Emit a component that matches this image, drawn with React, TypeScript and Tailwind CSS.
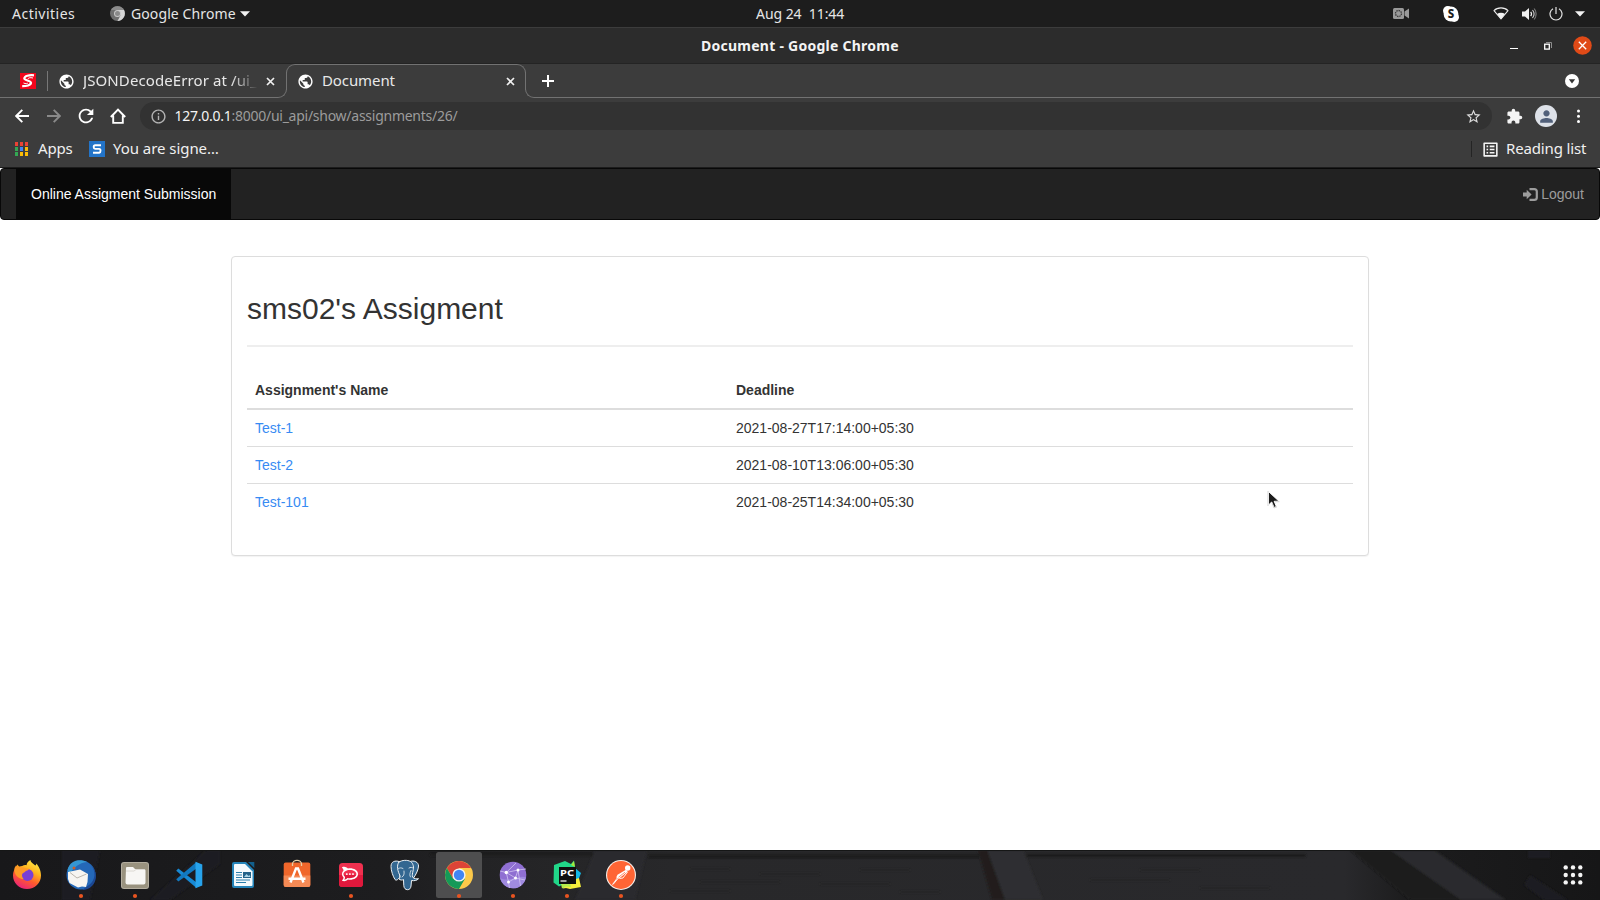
import type { ReactNode } from 'react';
import { MdExtension, MdInfoOutline, MdListAlt, MdPerson, MdPublic, MdRefresh, MdStarBorder } from 'react-icons/md';
import { SiRocketdotchat } from 'react-icons/si';

const assignments = [
  { name: 'Test-1', deadline: '2021-08-27T17:14:00+05:30' },
  { name: 'Test-2', deadline: '2021-08-10T13:06:00+05:30' },
  { name: 'Test-101', deadline: '2021-08-25T14:34:00+05:30' },
];

function Caret({ className = '' }: { className?: string }) {
  return (
    <svg className={`h-[6px] w-[10px] shrink-0 ${className}`} viewBox="0 0 10 6">
      <path d="M0 0.3h10L5 5.6z" fill="#f2f2f2" />
    </svg>
  );
}

function CloseX({ className = '' }: { className?: string }) {
  return (
    <svg className={`size-[9px] shrink-0 ${className}`} viewBox="0 0 9 9">
      <path d="M1 1l7 7M8 1l-7 7" stroke="#f0f0f0" strokeWidth="1.7" />
    </svg>
  );
}

function SystemBar() {
  return (
    <div className="flex h-[27px] items-center bg-[#1d1d1d] text-[14px] leading-[27px] whitespace-pre text-[#e6e6e6]">
      <span className="ml-[12px] w-[98px] tracking-[0.5px]">Activities</span>
      <svg className="size-[15px] shrink-0" viewBox="0 0 30 30">
        <circle cx="15" cy="15" r="15" fill="#6f6f6f" />
        <path d="M15 8h13a15 15 0 0 1-13 22l6-11z" fill="#d6d6d6" />
        <path d="M2 8a15 15 0 0 1 26 0H15z" fill="#8b8b8b" />
        <circle cx="15" cy="15" r="7" fill="#c9c9c9" />
        <circle cx="15" cy="15" r="5" fill="#8a8a8a" />
      </svg>
      <span className="ml-[6px] w-[109px] tracking-[0.1px]">Google Chrome</span>
      <Caret />
      <span className="ml-[506px] w-[637px] pb-px tracking-[-0.05px]">Aug 24  11:44</span>
      <svg className="h-[11px] w-[16px] shrink-0" viewBox="0 0 16 11">
        <rect width="11" height="11" rx="1.5" fill="#9a9a9a" />
        <path d="M16 0.5v10l-4.5-3v-4z" fill="#9a9a9a" />
        <circle cx="5.5" cy="5.5" r="3" fill="none" stroke="#3a3a3a" strokeWidth="1.3" strokeDasharray="1.5 0.8" />
      </svg>
      <svg className="ml-[34px] size-[16px] shrink-0" viewBox="0 0 16 16">
        <circle cx="8" cy="8" r="7.4" fill="#fff" />
        <circle cx="4.8" cy="4.8" r="4.8" fill="#fff" />
        <circle cx="11.2" cy="11.2" r="4.8" fill="#fff" />
        <text x="8" y="12" textAnchor="middle" fontFamily="Noto Sans, sans-serif" fontSize="11.5" fontWeight="800" fill="#1d1d1d">S</text>
      </svg>
      <svg className="ml-[34px] h-[13px] w-[16px] shrink-0" viewBox="0 0 16 13">
        <path d="M1 3.6C4.5 0 11.5 0 15 3.6L8 12z" fill="none" stroke="#ededed" strokeWidth="1.1" strokeLinejoin="round" />
        <path d="M4 7c2.3-1.6 5.7-1.6 8 0l-4 5z" fill="#f4f4f4" />
      </svg>
      <svg className="ml-[13px] h-[14px] w-[15px] shrink-0" viewBox="0 0 15 14">
        <path d="M0 4.5h3L7 1v12L3 9.500H0z" fill="#f0f0f0" />
        <path d="M8.7 4.8q1.700 2.200 0 4.400" fill="none" stroke="#f0f0f0" strokeWidth="1.2" />
        <path d="M10.5 3q3.200 4 0 8" fill="none" stroke="#cfcfcf" strokeWidth="1.1" />
        <path d="M12.3 1.5q3.600 5.500 0 11" fill="none" stroke="#8b8b8b" strokeWidth="1" />
      </svg>
      <svg className="ml-[12px] size-[14px] shrink-0" viewBox="0 0 14 14">
        <path d="M4 1.8a6 6 0 1 0 6 0M7 0v7" fill="none" stroke="#e3e3e3" strokeWidth="1.2" />
      </svg>
      <Caret className="ml-[12px]" />
    </div>
  );
}

function TitleBar() {
  return (
    <div className="flex h-[37px] items-center border-t border-b border-t-[#3c3c3c] border-b-[#242424] bg-[#2c2c2c]">
      <span className="ml-[701px] w-[809px] text-[14px] leading-[35px] font-bold tracking-[0.25px] whitespace-pre text-[#f4f4f4]">Document - Google Chrome</span>
      <svg className="h-[12px] w-[8px] shrink-0" viewBox="0 0 8 12">
        <path d="M0 8.5h8" stroke="#fff" strokeWidth="1" />
      </svg>
      <svg className="ml-[26px] size-[8px] shrink-0" viewBox="0 0 8 8">
        <path d="M2 0.5h5.5V6" fill="none" stroke="#8d8d8d" />
        <rect x="0.7" y="2.2" width="4.6" height="4.9" fill="none" stroke="#fff" strokeWidth="1.3" />
      </svg>
      <svg className="ml-[20.5px] size-[19px] shrink-0" viewBox="0 0 19 19">
        <circle cx="9.5" cy="9.5" r="9.3" fill="#e04a17" />
        <path d="M5.8 5.8l7.4 7.4M13.2 5.8l-7.4 7.4" stroke="#fff" strokeWidth="1.3" />
      </svg>
    </div>
  );
}

function TabStrip() {
  return (
    <div className="flex h-[34px] bg-[#3c3c3c] text-[15px] text-[#e8e8e8]">
      <div className="mt-[8px] flex h-[26px] w-[287px] shrink-0 items-center rounded-br-[9px] border-r border-b border-[#727272] pb-[7px]">
        <svg className="ml-[20px] size-[16px] shrink-0" viewBox="0 0 16 16">
          <rect width="16" height="16" fill="#f2061c" />
          <path d="M14 2.300C9 1.800 4.500 3 4.300 5.300S11 7.300 11 9.800 6 13.300 2.200 13.200" fill="none" stroke="#fff" strokeWidth="2.2" />
          <path d="M13 5c-3-.8-5 0-5 1M3.500 10c2 1 4 .7 4.500-.2" fill="none" stroke="#fff" strokeWidth="1" />
        </svg>
        <div className="ml-[11px] h-[20px] w-px bg-[#777]" />
        <MdPublic className="ml-[10px] size-[17px] shrink-0 text-white" />
        <span className="ml-[8px] w-[175px] overflow-hidden mask-r-from-85% mask-r-to-100% pb-[2px] leading-[22px] tracking-[0.1px] whitespace-pre">JSONDecodeError at /ui_</span>
        <CloseX className="ml-[8px]" />
      </div>
      <div className="-ml-px flex h-[26px] w-[240px] shrink-0 items-center rounded-t-[9px] border-t border-r border-l border-[#727272] pt-[8px]">
        <MdPublic className="ml-[10px] size-[17px] shrink-0 text-white" />
        <span className="ml-[8px] w-[184px] pb-[3px] leading-[22px] tracking-[-0.1px] whitespace-pre">Document</span>
        <CloseX />
      </div>
      <div className="-ml-px mt-[8px] flex h-[26px] grow items-center rounded-bl-[9px] border-b border-l border-[#727272] pb-[7px]">
        <svg className="ml-[16px] size-[12px]" viewBox="0 0 12 12">
          <path d="M6 0v12M0 6h12" stroke="#fff" strokeWidth="2" />
        </svg>
        <svg className="mr-[21px] ml-auto size-[14px]" viewBox="0 0 14 14">
          <circle cx="7" cy="7" r="7" fill="#fff" />
          <path d="M3.8 5.2h6.4L7 9.600z" fill="#333" />
        </svg>
      </div>
    </div>
  );
}

function Toolbar() {
  return (
    <div className="flex h-[36px] items-center bg-[#3c3c3c]">
      <svg className="ml-[15px] size-[14px] shrink-0" viewBox="0 0 14 14">
        <path d="M14 7H1.5M7.3 0.8L1.2 7l6.100 6.200" fill="none" stroke="#fff" strokeWidth="1.9" />
      </svg>
      <svg className="ml-[18px] size-[14px] shrink-0" viewBox="0 0 14 14">
        <path d="M0 7h12.5M6.7 0.8L12.800 7l-6.100 6.200" fill="none" stroke="#8a8a8a" strokeWidth="1.9" />
      </svg>
      <MdRefresh className="ml-[14px] size-[22px] shrink-0 text-white" />
      <svg className="ml-[13px] size-[16px] shrink-0" viewBox="0 0 16 16">
        <path d="M0.8 9L8 1.600 15.200 9M3.200 7.500v7.400h9.600V7.500" fill="none" stroke="#fff" strokeWidth="1.9" />
      </svg>
      <div className="ml-[14px] flex h-[28px] w-[1352px] shrink-0 items-center rounded-full bg-[#323232]">
        <MdInfoOutline className="ml-[9.5px] size-[17px] shrink-0 text-[#b4b4b4]" />
        <span className="ml-[8px] pb-[2px] text-[14px] tracking-[-0.26px] whitespace-pre text-[#9c9c9c]">
          <span className="text-[#f4f4f4]">127.0.0.1</span>:8000/ui_api/show/assignments/26/
        </span>
        <MdStarBorder className="mr-[10px] ml-auto size-[17px] text-[#dcdcdc]" />
      </div>
      <MdExtension className="ml-[13.5px] size-[17px] shrink-0 text-[#f4f4f4]" />
      <div className="ml-[12.5px] flex size-[22px] shrink-0 items-center justify-center rounded-full bg-[#dde1e8]">
        <MdPerson className="size-[19px] text-[#51607a]" />
      </div>
      <svg className="ml-[19px] h-[14px] w-[4px] shrink-0" viewBox="0 0 4 14">
        <circle cx="2.5" cy="2" r="1.5" fill="#fff" />
        <circle cx="2.5" cy="7.2" r="1.5" fill="#fff" />
        <circle cx="2.5" cy="12.4" r="1.5" fill="#fff" />
      </svg>
    </div>
  );
}

function BookmarksBar() {
  return (
    <div className="flex h-[34px] items-center border-b border-[#1c1c1c] bg-[#3c3c3c] pb-[3px] text-[15px] text-[#f0f0f0]">
      <div className="ml-[15px] grid shrink-0 grid-cols-[repeat(3,3px)] gap-x-[2px] gap-y-px">
        <i className="h-[4px] w-[3px] bg-[#ea4335]" />
        <i className="h-[4px] w-[3px] bg-[#ea4335]" />
        <i className="h-[4px] w-[3px] bg-[#ea4335]" />
        <i className="h-[4px] w-[3px] bg-[#34a853]" />
        <i className="h-[4px] w-[3px] bg-[#4285f4]" />
        <i className="h-[4px] w-[3px] bg-[#fbbc05]" />
        <i className="h-[4px] w-[3px] bg-[#34a853]" />
        <i className="h-[4px] w-[3px] bg-[#fbbc05]" />
        <i className="h-[4px] w-[3px] bg-[#fbbc05]" />
      </div>
      <span className="ml-[10px] w-[51px] pb-[2px] leading-[28px] tracking-[-0.15px]">Apps</span>
      <svg className="size-[16px] shrink-0" viewBox="0 0 16 16">
        <rect width="16" height="16" fill="#2374c8" />
        <path d="M12 4.200H6.200Q4.700 4.200 4.700 6T6.200 7.900h4Q11.500 7.900 11.500 9.800T10.200 11.800H4" fill="none" stroke="#fff" strokeWidth="1.9" />
      </svg>
      <span className="ml-[8px] pb-[2px] leading-[28px] tracking-[-0.05px]">You are signe…</span>
      <div className="ml-auto h-[16px] w-px bg-[#242424]" />
      <MdListAlt className="ml-[9px] size-[19px] shrink-0 text-[#f4f4f4]" />
      <span className="ml-[6px] w-[94px] pb-[2px] leading-[28px] tracking-[-0.15px] whitespace-pre">Reading list</span>
    </div>
  );
}

function Page() {
  return (
    <main className="h-[682px] bg-white font-['Liberation_Sans',Arial,sans-serif] text-[14px] leading-[20px] text-[#333]">
      <nav className="flex h-[52px] items-stretch rounded-[4px] border border-[#080808] bg-[#222] pr-[15px] pl-[15px]">
        <a className="flex w-[215px] items-center bg-[#080808] pl-[15px] text-white">Online Assigment Submission</a>
        <a className="ml-auto flex items-center text-[#9d9d9d]">
          <svg className="mr-[3px] h-[13px] w-[15px]" viewBox="0 0 15 13">
            <path d="M0 4.600h3.700V1.800L8.600 6.500 3.700 11.200V8.400H0z" fill="#9d9d9d" />
            <path d="M6.500 1.200h4.700Q13.800 1.200 13.800 3.600v5.800Q13.800 11.800 11.200 11.800H6.500" fill="none" stroke="#9d9d9d" strokeWidth="2.2" />
          </svg>
          Logout
        </a>
      </nav>
      <section className="mx-auto mt-[36px] h-[300px] w-[1138px] rounded-[4px] border border-[#ddd] bg-white px-[15px] pt-[35px] shadow-[0_1px_1px_rgba(0,0,0,0.05)]">
        <h2 className="h-[55px] border-b-2 border-[#eee] text-[30px] leading-[33px]">sms02's Assigment</h2>
        <div className="mt-[25px] grid grid-cols-[481px_1fr]">
          <b className="h-[38px] border-b-2 border-[#ddd] p-[8px]">Assignment's Name</b>
          <b className="h-[38px] border-b-2 border-[#ddd] p-[8px]">Deadline</b>
        </div>
        {assignments.map((a) => (
          <div key={a.name} className="grid h-[37px] grid-cols-[481px_1fr] border-b border-[#ddd] last:border-b-0">
            <a className="p-[8px] text-[#378bf3]">{a.name}</a>
            <span className="p-[8px]">{a.deadline}</span>
          </div>
        ))}
      </section>
    </main>
  );
}

function DockItem({ running, active, children }: { running?: boolean; active?: boolean; children: ReactNode }) {
  return (
    <svg className="h-[50px] w-[54px] shrink-0" viewBox="0 0 54 50">
      {active && <rect x="4" y="2" width="46" height="46" rx="2.5" fill="#4e4e4f" />}
      {children}
      {running && <circle cx="27" cy="46" r="2.1" fill="#e95420" />}
    </svg>
  );
}

function DockBackground() {
  return (
    <svg className="absolute inset-0 h-[50px] w-[1600px]" viewBox="0 0 1600 50">
      <defs>
        <linearGradient id="wood" x1="0" x2="1" y1="0" y2="0">
          <stop offset="0" stopColor="#18181a" />
          <stop offset="0.24" stopColor="#1d1d1f" />
          <stop offset="0.3" stopColor="#232325" />
          <stop offset="0.42" stopColor="#28282a" />
          <stop offset="0.84" stopColor="#29292c" />
          <stop offset="0.88" stopColor="#1c1c1d" />
          <stop offset="1" stopColor="#161617" />
        </linearGradient>
        <filter id="soft" x="-5%" y="-20%" width="110%" height="140%">
          <feGaussianBlur stdDeviation="0.9" />
        </filter>
      </defs>
      <rect width="1600" height="50" fill="url(#wood)" />
      <g filter="url(#soft)">
        <path d="M62 0h38L90 50H62zM150 50L206 0h14v14l-50 36z" fill="#1f1f22" />
        <path d="M430 3.5h170v2.5H430zM648 4h332v3.5H648zM1026 4h280v3h-280z" fill="#1b1a1a" />
        <path d="M595 0h52l-12 50h-60z" fill="#2b2b2f" />
        <path d="M978 0h10l18 50h-14z" fill="#201e1d" />
        <path d="M987 0h36l20 50h-38z" fill="#2f2f31" />
        <path d="M1350 0h85l70 50h-95z" fill="#1f1e1e" />
        <path d="M1390 0h44l72 50h-45z" fill="#2a2b2e" />
        <path d="M1528 0h22v8h-22zM1530 25l38 25h-24l-20-15z" fill="#1f1f22" />
        <path d="M690 19h40M760 24h60M700 32h80M820 34h70M860 20h50M670 41h60M900 42h40M1090 30h80M1140 20h60M1200 38h70" stroke="#242427" strokeWidth="1.2" />
      </g>
      <path d="M0 0.5h1600" stroke="#151616" />
    </svg>
  );
}

function Dock() {
  return (
    <div className="relative h-[50px] bg-[#1c1c1d]">
      <DockBackground />
      <div className="relative flex h-[50px] items-center">
        <DockItem>
          <defs>
            <linearGradient id="fox" x1="0.8" y1="0" x2="0.3" y2="1">
              <stop offset="0" stopColor="#fff04a" />
              <stop offset="0.35" stopColor="#ffb51f" />
              <stop offset="0.65" stopColor="#ff5b2c" />
              <stop offset="1" stopColor="#e9217c" />
            </linearGradient>
          </defs>
          <path d="M27 39C19 39 13 33 13 25.500c0-3.500 1.200-6.500 3.200-8.500l1-2.500 2 2 3-.5c1.500-1 3-1 4.300-.8.300-2.300 2-4.200 3.800-5.200.5 2.500 3 3.500 5 5.500 1-.5 1-1.200 1-2 2.300 2.500 4.700 6.500 4.700 12C41 33 35 39 27 39z" fill="url(#fox)" />
          <circle cx="27.5" cy="25" r="6" fill="#7a3fd6" />
          <path d="M14.500 18l1.500-2.500 3 2.500c2-1 4.500-1 6 0l4 .8c-.5 1.800-2.500 1.900-3.500 2.400-1 1.500-3.500 1.500-3.500 4 0 1.500.7 3 2 4-6 0-10.500-5-9.500-11.200z" fill="#ff9a26" />
        </DockItem>
        <DockItem running>
          <circle cx="27" cy="25" r="14.5" fill="#2468b8" />
          <path d="M13.500 20C16 9 27 9 33 12c-8 1-13 5-17 12z" fill="#3596d2" />
          <path d="M37 15c5 6 5 15-2 20l-7 5c8 0 14-6 14-14 0-4-2-8-5-11z" fill="#1b4792" />
          <path d="M14 22l12-2.500 8 4.500-.5 8-1.500 5-4-.5-4 1-8.500-4.500L14 29z" fill="#f7f5f1" />
          <path d="M16 22.500l7 5.500 9.500-4" fill="none" stroke="#bbb6ad" strokeWidth="1" />
          <circle cx="20" cy="18" r="1.5" fill="#d15b25" />
        </DockItem>
        <DockItem running>
          <rect x="13" y="12" width="28" height="27" rx="3" fill="#b3ad9f" />
          <rect x="14" y="13" width="26" height="25" rx="2" fill="#99927f" />
          <path d="M18 18q0-1 1-1h6l2 2h9q1.500 0 1.500 1.500V32.500q0 2-2 2h-16q-2 0-2-2z" fill="#f7f6f4" />
          <path d="M18 21h8l2-1.500h9" fill="none" stroke="#d6d3cb" strokeWidth="0.8" />
        </DockItem>
        <DockItem>
          <path d="M14.200 20.800L16.300 18.500 34.500 32.500v5.500z" fill="#1789d4" />
          <path d="M14.200 29.200L34.500 12v6.500L16.300 31.500z" fill="#1279c0" />
          <path d="M33.500 11.800l6.800 2.800v20.800l-6.800 2.800z" fill="#27a3ec" />
        </DockItem>
        <DockItem>
          <path d="M18 12h12l8 8v16q0 2-2 2H18q-2 0-2-2V14q0-2 2-2z" fill="#2584b9" />
          <path d="M19 14h10l7.500 7.500V35q0 1-1 1H19q-1 0-1-1V15q0-1 1-1z" fill="#f4fafd" />
          <path d="M32 12h6.300v6z" fill="#12608d" />
          <path d="M20 22.500h6M20 25h6M20 27.500h6M20 30h14M20 32.500h10" stroke="#2a7eac" strokeWidth="1.2" />
          <rect x="27" y="22" width="8" height="6" fill="#226289" />
          <path d="M28 27l2.500-3 2 2 1-1 1 2z" fill="#a9d5e8" />
        </DockItem>
        <DockItem>
          <rect x="13.7" y="12.5" width="26.6" height="24.5" rx="2" fill="#f0672b" />
          <path d="M13.700 25.500h26.600v9.500q0 2-2 2H15.700q-2 0-2-2z" fill="#f58a55" />
          <path d="M22.500 16v-2a4.500 3.600 0 0 1 9 0v2" fill="none" stroke="#e6cfa6" strokeWidth="1.3" />
          <path d="M20.500 32.500l5.500-14h2l5.500 14M18.500 28.800h17" fill="none" stroke="#fff" strokeWidth="2.4" />
        </DockItem>
        <DockItem running>
          <rect x="15" y="13" width="24" height="24" rx="3.5" fill="#f0304f" />
          <path d="M15 25h24v8.500q0 3.500-3.500 3.500h-17q-3.500 0-3.500-3.500z" fill="#e0183c" />
          <SiRocketdotchat x="18" y="16" width="18" height="18" color="#fff" />
        </DockItem>
        <DockItem>
          <g fill="#336791" stroke="#eef2f5" strokeWidth="1" strokeLinejoin="round" strokeLinecap="round">
            <path d="M21 11.500c-4-1.300-8 0-8 5 0 4 2 10 4 13 1.500 1.500 3 0 4.500-2z" />
            <path d="M32 11.500c4-1.500 8.500.5 8.500 4.500 0 3.500-2.500 8.500-5 12l-3-1.500z" />
            <path d="M21 12c3-2 8.500-2.300 11.500-.5 3 2 3.500 6 2.500 9.500-.5 2.500-1 4-.5 6 1.500 2 4 2 6 1.700-1.500 1.900-4.500 2.300-7 1.800l-.5 5.500c-.3 2.500-1.500 3.700-3.500 3.700s-3.500-1.500-3.700-4l-.3-6.200c-1 .8-3.500.7-4.500-.5.500-1.200 1.500-1.800 1-3.500-2-3.500-4-10-1-13.500z" />
            <path d="M25 18.500c-1.500-1-3.500-.7-4.500 0M31 18c1.500-1 3-.7 4 0M24 27c1.700-1 2.500-2.500 2-6M32.500 27c-1-1.500-1-3 .5-6.500" fill="none" strokeWidth="0.8" />
          </g>
        </DockItem>
        <DockItem running active>
          <circle cx="27" cy="25" r="14" fill="#fcc94a" />
          <path d="M14.876 18A14 14 0 0 1 39.124 18H27L20.900 28.500z" fill="#dc4437" />
          <path d="M14.876 18A14 14 0 0 0 27 39L33.100 28.500 20.900 28.500z" fill="#149958" />
          <circle cx="27" cy="25" r="6.6" fill="#f3f3f3" />
          <circle cx="27" cy="25" r="5.2" fill="#4285f4" />
        </DockItem>
        <DockItem running>
          <circle cx="27" cy="25" r="13.3" fill="#8f6fd2" />
          <path d="M14 28a13.300 13.300 0 0 0 26-.5C33 24 24 33 14 28z" fill="#a08be0" />
          <path d="M14 21l6.300 1.500L32 20l8-1M20.300 22.500L30 13M32 20l2.500 16M20.300 22.500L29.500 28 39 30M22.500 32l7-4 2.500-8M20.300 22.500l2.200 9.500 1 6" fill="none" stroke="#d2c5f2" strokeWidth="0.8" />
          <circle cx="20.3" cy="22.5" r="1.7" fill="#fff" />
          <circle cx="32" cy="20" r="1.5" fill="#fff" />
          <circle cx="29.5" cy="28" r="1.5" fill="#fff" />
          <circle cx="22.5" cy="32" r="1.5" fill="#fff" />
        </DockItem>
        <DockItem running>
          <path d="M14 15l11-4 6 3 3-3.500 1 8-12 16-4 2-5.500-4z" fill="#21d789" />
          <path d="M31 15l3-4 1 6z" fill="#a5e93c" />
          <path d="M35 18l6 5-3 8h-4z" fill="#14b9e8" />
          <path d="M24 33l15-5 2 9-11 2-4-1-3 .5z" fill="#f5ee3c" />
          <path d="M21 34l9-1 1 4-5-.5-4 2z" fill="#b5ec4c" />
          <rect x="19" y="17" width="17" height="17" fill="#101010" />
          <text x="20" y="26" fontFamily="Noto Sans, sans-serif" fontSize="9.5" fontWeight="700" fill="#fff" textLength="14" lengthAdjust="spacingAndGlyphs">PC</text>
          <path d="M20.500 31h6" stroke="#fff" strokeWidth="1.2" />
        </DockItem>
        <DockItem running>
          <circle cx="27" cy="25" r="15" fill="#f7efe9" />
          <circle cx="27" cy="25" r="13.9" fill="#ff6534" />
          <circle cx="33.7" cy="18" r="2.7" fill="#fff" />
          <path d="M32 19.800L23.500 24.800l-1.300 2.700 2.800.9 8.700-6.800z" fill="#fff" />
          <path d="M24 27L18.500 34.500M24.500 28L19 34.500M33.500 22l-4.500 6-3.500.5" stroke="#fff" strokeWidth="0.9" fill="none" />
          <path d="M24.500 27.200l6.500-5" stroke="#ff6534" strokeWidth="0.7" />
        </DockItem>
        <svg className="mr-[17px] ml-auto size-[20px]" viewBox="0 0 20 20">
          {[2.4, 10, 17.4].map((y) => [2.7, 10, 17.3].map((x) => <circle key={`${x}-${y}`} cx={x} cy={y} r="2.2" fill="#f5f5f5" />))}
        </svg>
      </div>
    </div>
  );
}

export default function App() {
  return (
    <div className="relative h-[900px] w-[1600px] overflow-hidden bg-white font-['Noto_Sans',sans-serif]">
      <SystemBar />
      <TitleBar />
      <TabStrip />
      <Toolbar />
      <BookmarksBar />
      <Page />
      <Dock />
      <svg className="absolute top-[490px] left-[1267px] h-[20px] w-[14px]" viewBox="0 0 14 20">
        <path d="M1.500 1.500V15l3.200-3 2.300 5.500 2.400-1-2.200-5.200 4.800-.1z" fill="#1c1c1c" stroke="#fff" strokeWidth="1" />
        <path d="M1 1v15M5 12.700l2 5.300 3-1.200M8 11.700h4.500" fill="none" stroke="#bbb" strokeWidth="0.6" />
      </svg>
    </div>
  );
}
